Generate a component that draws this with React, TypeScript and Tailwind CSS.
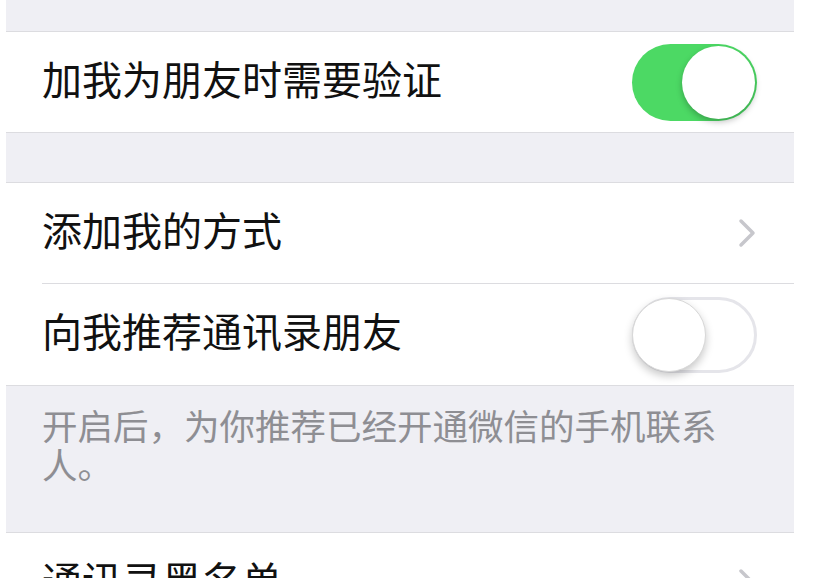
import React from 'react'

const font = { fontFamily: '"Noto Sans CJK SC", "Noto Sans", sans-serif' }

function Chevron() {
  return (
    <svg width="20" height="30" viewBox="0 0 20 30" className="flex-none">
      <polyline points="4,3 16,15 4,27" fill="none" stroke="#c7c7cc" strokeWidth="3.5" strokeLinecap="round" strokeLinejoin="round" />
    </svg>
  )
}

function Toggle({ on }: { on: boolean }) {
  if (on) {
    return (
      <div className="w-[125px] h-[77px] rounded-full bg-[#4cd964] flex items-center justify-end p-[2px] flex-none">
        <div className="w-[73px] h-[73px] rounded-full bg-white shadow-[0_3px_6px_rgba(0,0,0,0.25)]" />
      </div>
    )
  }
  return (
    <div className="w-[125px] h-[76px] rounded-full bg-white border-[3px] border-[#e5e5ea] flex items-center justify-start flex-none">
      <div className="w-[74px] h-[74px] -ml-[3px] rounded-full bg-white border border-[#d8d8d8] shadow-[0_4px_8px_rgba(0,0,0,0.22)]" />
    </div>
  )
}

function Row({ label, right, divider, tall }: { label: string, right: React.ReactNode, divider?: boolean, tall?: boolean }) {
  return (
    <div className="bg-white pl-[36px]">
      <div className={`${tall ? 'h-[101px]' : 'h-[100px]'} flex items-center justify-between pr-[37px] ${divider ? 'border-b border-[#dcdce0]' : ''}`}>
        <span className="text-[40px] leading-none text-[#111] pb-[9px]">{label}</span>
        {right}
      </div>
    </div>
  )
}

export default function App() {
  return (
    <div className="w-[815px] h-[578px] bg-white overflow-hidden" style={font}>
      <div className="ml-[6px] w-[788px] bg-[#efeff4]">
        <div className="h-[31px]" />

        <div className="border-y border-[#dcdce0]">
          <Row label="加我为朋友时需要验证" right={<Toggle on />} />
        </div>

        <div className="h-[49px]" />

        <div className="border-y border-[#dcdce0]">
          <Row label="添加我的方式" right={<Chevron />} divider tall />
          <Row label="向我推荐通讯录朋友" right={<Toggle on={false} />} tall />
        </div>

        <div className="h-[146px] pl-[36px] pr-[30px] pt-[19px]">
          <p className="text-[35.5px] leading-[39px] text-[#8e8e93]">
            开启后，为你推荐已经开通微信的手机联系
            <br />
            人。
          </p>
        </div>

        <div className="border-t border-[#dcdce0]">
          <Row label="通讯录黑名单" right={<Chevron />} />
        </div>
      </div>
    </div>
  )
}
